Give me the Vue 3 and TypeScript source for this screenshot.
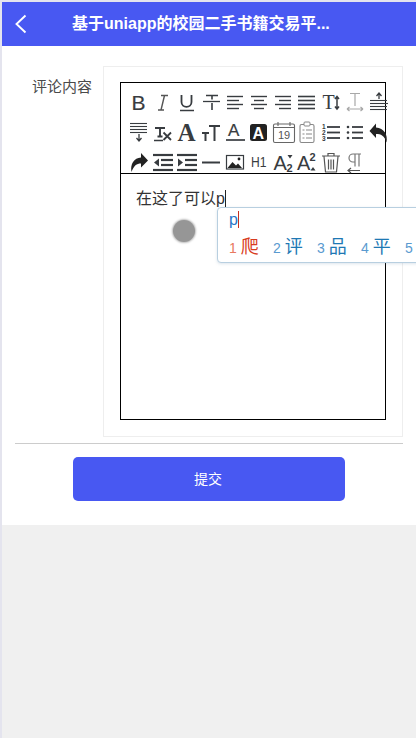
<template>
  <div class="page">
    <div class="content">
      <header class="nav">
        <button class="back" aria-label="back">
          <svg width="14" height="20" viewBox="0 0 14 20"><path d="M11.5 1.500 2.500 10l9 8.500" fill="none" stroke="#fff" stroke-width="1.900" /></svg>
        </button>
        <div class="title">基于uniapp的校园二手书籍交易平...</div>
      </header>

      <main class="form">
        <div class="row">
          <label class="label">评论内容</label>
          <div class="box">
            <div class="editor">
              <div class="toolbar">
                <span v-for="icon in icons" :key="icon.id" class="tool">
                  <svg width="24" height="24" viewBox="0 0 24 24" v-html="icon.body" />
                </span>
              </div>
              <div class="body-text">在这了可以p<i class="caret" /></div>
              <div class="touch" />
              <div class="ime">
                <div class="ime-input">p<i class="ime-caret" /></div>
                <div class="ime-list">
                  <span v-for="(c, i) in candidates" :key="i" class="cand" :class="{ first: i === 0 }">
                    <em>{{ i + 1 }}</em>{{ c }}
                  </span>
                </div>
              </div>
            </div>
          </div>
        </div>
        <button class="submit">提交</button>
      </main>
    </div>
  </div>
</template>

<script setup lang="ts">
interface Icon {
  id: string
  body: string
}

const dark = '#383c40'
const sans = 'font-family="Liberation Sans, sans-serif"'
const serif = 'style="font-family:\'Liberation Serif\',serif"'

const line = (y: number, x1: number, x2: number, w = 1.3, c = dark) =>
  `<path d="M${x1} ${y}H${x2}" stroke="${c}" stroke-width="${w}" fill="none"/>`
const lines = (rows: number[][], w = 1.4, c = dark) => rows.map(r => line(r[0], r[1], r[2], w, c)).join('')
const txt = (s: string, x: number, y: number, size: number, extra = '') =>
  `<text x="${x}" y="${y}" font-size="${size}" fill="${dark}" ${sans} ${extra}>${s}</text>`

const icons: Icon[] = [
  { id: 'bold', body: txt('B', 5.5, 19, 21, `stroke="${dark}" stroke-width=".2"`) },
  { id: 'italic', body: `<path d="M11 4.500h7M8 19h6M14.500 4.500 11 19" stroke="#555" stroke-width="1.400" fill="none"/>` },
  { id: 'underline', body: `<path d="M7.500 4v7c0 6.500 10 6.500 10 0V4" fill="none" stroke="${dark}" stroke-width="1.800"/>` + line(19.5, 6, 20, 1.5) },
  { id: 'strike', body: `<path d="M8 4.500h12M14 4.500v4M14 12v7" fill="none" stroke="${dark}" stroke-width="1.600"/>` + line(10.5, 5, 22, 1.3) },
  { id: 'left', body: lines([[5.5, 5, 21], [9.5, 5, 17], [13.5, 5, 21], [17.5, 5, 17]]) },
  { id: 'center', body: lines([[5.5, 5, 21], [9.5, 8, 18], [13.5, 5, 21], [17.5, 8, 18]]) },
  { id: 'right', body: lines([[5.5, 5, 21], [9.5, 9, 21], [13.5, 5, 21], [17.5, 9, 21]]) },
  { id: 'justify', body: lines([[5.5, 4, 21], [9.5, 4, 21], [13.5, 4, 21], [17.5, 4, 21]], 1.6) },
  { id: 'size', body: `<text x="4.500" y="18" font-size="20" fill="${dark}" ${serif}>T</text><path d="M19 5.500v12.500M17 8l2-2.500L21 8M17 15.500l2 2.500 2-2.500" fill="none" stroke="${dark}" stroke-width="1.500"/>` },
  { id: 'letter', body: `<path d="M8 2.500h10M13 2.500V15M5 18h16M5 18l2.500-2M5 18l2.500 2M21 18l-2.500-2M21 18l-2.500 2" fill="none" stroke="#a8a8a8" stroke-width="1.200"/>` },
  { id: 'height', body: lines([[9.5, 4, 21], [12.5, 4, 22], [15.5, 4, 21], [18.5, 4, 21]], 1.1) + `<path d="M13 8V2.500M10.500 5 13 2l2.500 3" fill="none" stroke="${dark}" stroke-width="1.300"/>` },

  { id: 'spacing', body: lines([[3.5, 4, 21], [6.5, 4, 21], [9.5, 4, 21], [12.5, 4, 21]], 1.1) + `<path d="M13 14v6.500M10.500 18l2.500 3 2.500-3" fill="none" stroke="${dark}" stroke-width="1.300"/>` },
  { id: 'clear', body: `<path d="M5 8h10M10 8v8M7.500 16.500h5" fill="none" stroke="${dark}" stroke-width="1.900"/><path d="M13.500 12.500l7.500 7.500M21 12.500 13.500 20" stroke="${dark}" stroke-width="1.800"/>` + line(20.5, 4, 13, 1.5) },
  { id: 'font', body: `<text x="3.500" y="21" font-size="25" font-weight="700" fill="${dark}" ${serif}>A</text>` },
  { id: 'fontsize', body: `<path d="M4 13h7M7.500 13v8M11 6h11M16.500 6v15" fill="none" stroke="${dark}" stroke-width="2"/>` },
  { id: 'color', body: txt('A', 6, 16, 17, `stroke="${dark}" stroke-width=".2"`) + line(20, 4, 23, 1.700) },
  { id: 'bg', body: `<rect x="4" y="4" width="17" height="17" rx="2.500" fill="#222"/><text x="6.500" y="18.500" font-size="16" font-weight="700" fill="#fff" ${sans}>A</text>` },
  { id: 'date', body: `<rect x="3.500" y="4" width="21" height="18.500" rx="1.500" fill="none" stroke="#666" stroke-width="1.100"/><path d="M3.500 7.500h21M8 2v4M20 2v4" stroke="#666" stroke-width="1.100" fill="none"/><text x="8" y="18.500" font-size="11" fill="#555" ${sans}>19</text>` },
  { id: 'todo', body: `<rect x="6" y="4.500" width="14" height="18" rx="1.500" fill="none" stroke="#888" stroke-width="1.100"/><rect x="10" y="2" width="6" height="4" rx="1" fill="#fff" stroke="#888"/><path d="M8.500 10h2M8.500 14h2M8.500 18h2M12 10h6M12 14h6M12 18h6" stroke="#888" stroke-width="1.100"/>` },
  { id: 'ol', body: `<text x="4" y="9" font-size="6.500" font-weight="700" fill="${dark}" ${sans}>1</text><text x="4" y="14.500" font-size="6.500" font-weight="700" fill="${dark}" ${sans}>2</text><text x="4" y="20.500" font-size="6.500" font-weight="700" fill="${dark}" ${sans}>3</text>` + lines([[7, 9, 22], [12.5, 9, 22], [18, 9, 22]], 1.800) },
  { id: 'ul', body: `<circle cx="6" cy="7" r="1.300" fill="${dark}"/><circle cx="6" cy="12.500" r="1.300" fill="${dark}"/><circle cx="6" cy="18" r="1.300" fill="${dark}"/>` + lines([[7, 10, 21], [12.5, 10, 21], [18, 10, 21]], 1.800) },
  { id: 'undo', body: `<path d="M10 3.500 3.500 11 10 18v-4c5 0 8.500 1.500 10.500 8.500C22 14 18 8.500 10 7.500z" fill="#222"/>` },

  { id: 'redo', body: `<path d="M15 3l7 7.500-7 7v-4c-4.500 0-7 2-9.500 8.500C4 14 8 8 15 7.500z" fill="#222"/>` },
  { id: 'outdent', body: lines([[5, 3, 23], [20, 3, 23]], 2.200) + lines([[10, 11, 23], [15, 11, 23]], 2.200) + `<path d="M9 8.500v8l-5-4z" fill="${dark}"/>` },
  { id: 'indent', body: lines([[5, 3, 23], [20, 3, 23]], 2.200) + lines([[10, 11, 23], [15, 11, 23]], 2.200) + `<path d="M4 8.500v8l5-4z" fill="${dark}"/>` },
  { id: 'hr', body: line(12.5, 4, 22, 2) },
  { id: 'image', body: `<rect x="4.500" y="5.500" width="17" height="13.500" fill="none" stroke="${dark}" stroke-width="1.200"/><path d="M5.500 18l5-6 3.500 3.500 2-2 4 4.500z" fill="#222"/><circle cx="17" cy="9" r="1.400" fill="#222"/>` },
  { id: 'h1', body: `<text x="5" y="17" font-size="14" fill="${dark}" ${sans} textLength="15.500" lengthAdjust="spacingAndGlyphs">H1</text>` },
  { id: 'sub', body: txt('A', 3.500, 20, 20) + `<text x="16.500" y="21.500" font-size="11" font-weight="700" fill="${dark}" ${sans}>2</text><path d="M17.500 5h5L20 8.500z" fill="${dark}"/>` },
  { id: 'sup', body: txt('A', 3, 20, 20) + `<text x="15.500" y="11" font-size="11" font-weight="700" fill="${dark}" ${sans}>2</text><path d="M16.500 20.500h5l-2.500-3.500z" fill="${dark}"/>` },
  { id: 'trash', body: `<path d="M4 6h18M10 6V3.500h6V6M6 6.500 7.500 22h11L20 6.500M10.500 9.500v10M13 9.500v10M15.500 9.500v10" fill="none" stroke="#555" stroke-width="1.200"/>` },
  { id: 'para', body: `<path d="M19 4H11a3.500 3.500 0 0 0 0 8h2M13 4v12.500M17 4v12.500" fill="none" stroke="#777" stroke-width="1.200"/><path d="M6 20.500h12M9 18l-3 2.500L9 23" fill="none" stroke="#555" stroke-width="1.200"/>` }
]

const candidates = ['爬', '评', '品', '平', '']
</script>

<style scoped>
.page {
  box-sizing: border-box;
  width: 416px;
  height: 738px;
  padding: 2px 0 0 2px;
  background: #e4e4ee;
  overflow: hidden;
  font-family: "Liberation Sans", "Noto Sans CJK SC", sans-serif;
}

.content {
  height: 100%;
  background: #f0f0f0;
}

.nav {
  display: flex;
  align-items: center;
  height: 44px;
  background: #4858f2;
}

.back {
  width: 70px;
  height: 44px;
  flex: none;
  padding: 2px 0 0 12px;
  border: 0;
  background: none;
  text-align: left;
}

.title {
  color: #fff;
  font-size: 16px;
  font-weight: 700;
  line-height: 44px;
  white-space: nowrap;
}

.form {
  padding: 20px 0 24px;
  background: #fff;
}

.row {
  display: flex;
  margin: 0 13px;
  padding: 0 0 6px 17px;
  border-bottom: 1px solid #ccc;
}

.label {
  width: 60px;
  margin-right: 11px;
  padding-top: 10px;
  color: #4a4a4a;
  font-size: 15px;
  line-height: 22px;
}

.box {
  box-sizing: border-box;
  width: 300px;
  height: 371px;
  padding: 15px 16px;
  border: 1px solid #eee;
}

.editor {
  position: relative;
  box-sizing: border-box;
  width: 266px;
  height: 338px;
  border: 1px solid #000;
}

.toolbar {
  box-sizing: border-box;
  display: grid;
  grid-template-columns: repeat(11, 24px);
  grid-auto-rows: 29.5px;
  align-items: center;
  height: 91px;
  padding: 5px 0 0 5px;
  border-bottom: 1px solid #000;
}

.tool {
  display: block;
  width: 24px;
  height: 24px;
}

.tool svg {
  display: block;
  overflow: visible;
}

.body-text {
  padding: 13px 0 0 15px;
  color: #333;
  font-size: 16px;
  line-height: 24px;
}

.caret {
  display: inline-block;
  width: 1px;
  height: 17px;
  background: #222;
  vertical-align: -3px;
}

.touch {
  position: absolute;
  left: 52px;
  top: 137px;
  width: 22px;
  height: 22px;
  border-radius: 50%;
  background: #969696;
  box-shadow: 0 0 2px 1px #bbb;
}

.ime {
  position: absolute;
  left: 96px;
  top: 124px;
  box-sizing: border-box;
  width: 240px;
  height: 56px;
  padding: 2px 0 0 11px;
  border: 1px solid #b8cfe0;
  border-radius: 4px;
  background: #fff;
  box-shadow: 0 1px 3px rgba(120, 150, 180, 0.25);
}

.ime-input {
  color: #2a78c8;
  font-size: 16px;
  line-height: 20px;
}

.ime-caret {
  display: inline-block;
  width: 1px;
  height: 17px;
  background: #c83020;
  vertical-align: -3px;
}

.ime-list {
  display: flex;
  margin-top: 5px;
  white-space: nowrap;
}

.cand {
  width: 44px;
  flex: none;
  color: #1e78b4;
  font-size: 18px;
  line-height: 24px;
}

.cand em {
  margin-right: 4px;
  color: #5a9ad0;
  font-size: 14px;
  font-style: normal;
}

.cand.first {
  color: #d83a20;
}

.cand.first em {
  color: #e87860;
}

.submit {
  display: block;
  width: 272px;
  height: 44px;
  margin: 13px 0 0 71px;
  padding: 0 2px 3px 0;
  border: 0;
  border-radius: 5px;
  background: #4858f2;
  color: #fff;
  font-family: inherit;
  font-size: 14px;
}
</style>

<style>
body {
  background: #e4e4ee;
}
</style>
